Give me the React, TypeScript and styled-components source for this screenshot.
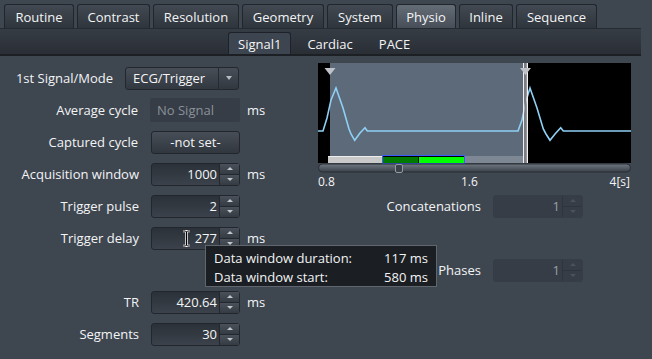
import React from 'react';
import styled, { createGlobalStyle } from 'styled-components';

const GlobalStyle = createGlobalStyle`
  html, body {
    margin: 0;
    padding: 0;
    background: #3e4650;
  }
`;

const Root = styled.div`
  position: relative;
  width: 652px;
  height: 359px;
  overflow: hidden;
  background: #3e4650;
  font-family: 'Open Sans', 'Noto Sans', sans-serif;
  font-size: 12px;
  color: #f3f4f5;
`;

const TabBar = styled.div`
  display: flex;
  gap: 3px;
  height: 28px;
  padding: 4px 0 0 4px;
  box-sizing: border-box;
`;

const Tab = styled.div<{ $width: number; $active?: boolean }>`
  width: ${(p) => p.$width}px;
  height: 24px;
  box-sizing: border-box;
  display: flex;
  align-items: center;
  justify-content: center;
  font-size: 13px;
  border: 1px solid #21262c;
  border-bottom: none;
  border-radius: 3px 3px 0 0;
  background: ${(p) =>
    p.$active
      ? 'linear-gradient(#646c76, #474e58)'
      : 'linear-gradient(#424952, #2f353c)'};
`;

const SubBar = styled.div`
  width: 641px;
  height: 28px;
  box-sizing: border-box;
  display: flex;
  align-items: flex-end;
  gap: 6px;
  padding-left: 228px;
  background: linear-gradient(#363c44, #2a2f36);
  border-top: 1px solid #262b31;
  border-bottom: 2px solid #1c2025;
`;

const SubTab = styled.div<{ $active?: boolean }>`
  height: 22px;
  box-sizing: border-box;
  display: flex;
  align-items: center;
  padding: 0 9px;
  font-size: 13px;
  border-radius: 3px 3px 0 0;
  border: 1px solid ${(p) => (p.$active ? '#1e2228' : 'transparent')};
  border-bottom: none;
  background: ${(p) => (p.$active ? '#3d4550' : 'transparent')};
`;

const Content = styled.div`
  display: flex;
  padding-top: 6px;
`;

const LeftColumn = styled.div`
  width: 318px;
  display: flex;
  flex-direction: column;
`;

const RightColumn = styled.div`
  width: 313px;
  display: flex;
  flex-direction: column;
`;

const FormRow = styled.div`
  display: flex;
  align-items: center;
  height: 32px;
`;

const Label = styled.div<{ $width?: number }>`
  width: ${(p) => p.$width ?? 151}px;
  box-sizing: border-box;
  padding-right: 12px;
  text-align: right;
  font-size: 13px;
  white-space: nowrap;
`;

const Unit = styled.span`
  margin-left: 7px;
  font-size: 13px;
`;

const Dropdown = styled.div`
  width: 114px;
  height: 23px;
  box-sizing: border-box;
  display: flex;
  border: 1px solid #23282e;
  border-radius: 3px;
  background: linear-gradient(#474e57, #323840);
  font-size: 13px;
`;

const DropdownText = styled.div`
  flex: 1;
  display: flex;
  align-items: center;
  padding-left: 7px;
`;

const DropdownArrow = styled.div`
  width: 19px;
  border-left: 1px solid #262b31;
  display: flex;
  align-items: center;
  justify-content: center;
  &::after {
    content: '';
    border-left: 3px solid transparent;
    border-right: 3px solid transparent;
    border-top: 4px solid #b8bcc1;
  }
`;

const ReadOnlyField = styled.div`
  width: 90px;
  height: 24px;
  box-sizing: border-box;
  display: flex;
  align-items: center;
  padding-left: 7px;
  border-radius: 2px;
  background: #363d46;
  color: #8b9199;
  font-size: 13px;
`;

const PushButton = styled.div`
  width: 89px;
  height: 23px;
  margin-left: 1px;
  box-sizing: border-box;
  display: flex;
  align-items: center;
  justify-content: center;
  border: 1px solid #22272d;
  border-radius: 3px;
  background: linear-gradient(#474e57, #31373e);
  font-size: 13px;
`;

const Spin = styled.div<{ $disabled?: boolean }>`
  position: relative;
  width: ${(p) => (p.$disabled ? 90 : 89)}px;
  height: 23px;
  box-sizing: border-box;
  display: flex;
  border: 1px solid ${(p) => (p.$disabled ? '#363d46' : '#22272d')};
  border-radius: 3px;
  background: ${(p) =>
    p.$disabled ? '#363d46' : 'linear-gradient(#2b3138, #3b424b)'};
  color: ${(p) => (p.$disabled ? '#9aa0a7' : '#f3f4f5')};
  font-size: 13px;
`;

const SpinValue = styled.div`
  flex: 1;
  display: flex;
  align-items: center;
  justify-content: flex-end;
  padding-right: 2px;
`;

const SpinButtons = styled.div<{ $disabled?: boolean }>`
  width: 19px;
  display: flex;
  flex-direction: column;
  border-left: 1px solid ${(p) => (p.$disabled ? '#2f353d' : '#23282e')};
`;

const SpinArrow = styled.div<{ $down?: boolean; $disabled?: boolean }>`
  flex: 1;
  display: flex;
  align-items: center;
  justify-content: center;
  background: ${(p) =>
    p.$disabled ? '#363d46' : 'linear-gradient(#4a515a, #353b42)'};
  border-top: ${(p) => (p.$down ? `1px solid ${p.$disabled ? '#2f353d' : '#23282e'}` : 'none')};
  &::after {
    content: '';
    border-left: 3px solid transparent;
    border-right: 3px solid transparent;
    ${(p) =>
      p.$down
        ? `border-top: 3px solid ${p.$disabled ? '#4a525c' : '#c4c8cc'};`
        : `border-bottom: 3px solid ${p.$disabled ? '#4a525c' : '#c4c8cc'};`}
  }
`;

const ChartBlock = styled.div`
  height: 128px;
  padding-top: 1px;
  box-sizing: border-box;
  display: flex;
  flex-direction: column;
`;

const AxisLabels = styled.div`
  display: grid;
  grid-template-columns: 143px 1fr auto;
  height: 17px;
  align-items: center;
  font-size: 12px;
  padding-right: 1px;
`;

const Tooltip = styled.div`
  position: absolute;
  left: 205px;
  top: 245px;
  width: 232px;
  height: 42px;
  box-sizing: border-box;
  padding: 2px 8px 0 8px;
  background: #1b1f23;
  border: 1px solid #60666e;
  font-size: 13px;
`;

const TipRow = styled.div`
  display: flex;
  justify-content: space-between;
  height: 19px;
  align-items: center;
`;

const Cursor = styled.svg`
  position: absolute;
  left: 182px;
  top: 230px;
`;

const tabs = [
  { name: 'Routine', width: 70 },
  { name: 'Contrast', width: 73 },
  { name: 'Resolution', width: 86 },
  { name: 'Geometry', width: 82 },
  { name: 'System', width: 66 },
  { name: 'Physio', width: 60, active: true },
  { name: 'Inline', width: 54 },
  { name: 'Sequence', width: 81 },
];

const SpinBox = ({ value, disabled }: { value: string; disabled?: boolean }) => (
  <Spin $disabled={disabled}>
    <SpinValue>{value}</SpinValue>
    <SpinButtons $disabled={disabled}>
      <SpinArrow $disabled={disabled} />
      <SpinArrow $down $disabled={disabled} />
    </SpinButtons>
  </Spin>
);

const wave =
  '0,68 5,68 9,55 13,37 18,25 25,45 31,66 33,71 36.7,77.3 42,70 47,64.7 49.3,68 ' +
  '200,68 204,57 208,38 212,25 219,45 225.3,66 228,71 232,77.3 237,71 242.7,64.7 245.3,68 313,68';

const Chart = () => (
  <svg width={313} height={110} viewBox="0 0 313 110">
    <defs>
      <linearGradient id="track" x1="0" y1="0" x2="0" y2="1">
        <stop offset="0" stopColor="#707882" />
        <stop offset="1" stopColor="#3a4048" />
      </linearGradient>
    </defs>
    <rect width={313} height={100} fill="#000" />
    <rect x={12} y={0} width={194} height={93} fill="#5d6a79" />
    <polyline points={wave} fill="none" stroke="#8fd0f5" strokeWidth={1.6} />
    <rect x={10} y={93} width={55} height={7} fill="#c9c9c9" />
    <rect x={10} y={93} width={55} height={1} fill="#eeeeee" />
    <rect x={65} y={94} width={35} height={6} fill="#007a00" />
    <rect x={101} y={94} width={45} height={6} fill="#00ff00" />
    <rect x={64.5} y={92.5} width={82} height={8} fill="none" stroke="#3a5cff" />
    <rect x={147} y={93} width={59} height={7} fill="#7e8894" />
    <rect x={205} y={0} width={1.5} height={100} fill="#f0f0f0" />
    <rect x={206.5} y={0} width={2} height={100} fill="#7a7f86" />
    <rect x={208.5} y={0} width={1.5} height={100} fill="#f0f0f0" />
    <polygon points="6.5,5 17.5,5 12,12" fill="#bfc3c8" />
    <polygon points="202,5 213,5 207.5,12" fill="#bfc3c8" />
    <rect x={0.5} y={101} width={312} height={8} rx={4} fill="url(#track)" stroke="#2a2f35" />
    <rect x={77.5} y={101.5} width={7} height={8} rx={1.5} fill="#3a4149" stroke="#959ba2" />
  </svg>
);

const App = () => (
  <Root>
    <GlobalStyle />
    <TabBar>
      {tabs.map((t) => (
        <Tab key={t.name} $width={t.width} $active={t.active}>
          {t.name}
        </Tab>
      ))}
    </TabBar>
    <SubBar>
      <SubTab $active>Signal1</SubTab>
      <SubTab>Cardiac</SubTab>
      <SubTab>PACE</SubTab>
    </SubBar>
    <Content>
      <LeftColumn>
        <FormRow>
          <Label $width={125}>1st Signal/Mode</Label>
          <Dropdown>
            <DropdownText>ECG/Trigger</DropdownText>
            <DropdownArrow />
          </Dropdown>
        </FormRow>
        <FormRow>
          <Label $width={150}>Average cycle</Label>
          <ReadOnlyField>No Signal</ReadOnlyField>
          <Unit>ms</Unit>
        </FormRow>
        <FormRow>
          <Label $width={150}>Captured cycle</Label>
          <PushButton>-not set-</PushButton>
        </FormRow>
        <FormRow>
          <Label>Acquisition window</Label>
          <SpinBox value="1000" />
          <Unit>ms</Unit>
        </FormRow>
        <FormRow>
          <Label>Trigger pulse</Label>
          <SpinBox value="2" />
        </FormRow>
        <FormRow>
          <Label>Trigger delay</Label>
          <SpinBox value="277" />
          <Unit>ms</Unit>
        </FormRow>
        <FormRow />
        <FormRow>
          <Label>TR</Label>
          <SpinBox value="420.64" />
          <Unit>ms</Unit>
        </FormRow>
        <FormRow>
          <Label>Segments</Label>
          <SpinBox value="30" />
        </FormRow>
      </LeftColumn>
      <RightColumn>
        <ChartBlock>
          <Chart />
          <AxisLabels>
            <span>0.8</span>
            <span>1.6</span>
            <span>4[s]</span>
          </AxisLabels>
        </ChartBlock>
        <FormRow>
          <Label $width={175}>Concatenations</Label>
          <SpinBox value="1" disabled />
        </FormRow>
        <FormRow />
        <FormRow>
          <Label $width={175}>Phases</Label>
          <SpinBox value="1" disabled />
        </FormRow>
      </RightColumn>
    </Content>
    <Tooltip>
      <TipRow>
        <span>Data window duration:</span>
        <span>117 ms</span>
      </TipRow>
      <TipRow>
        <span>Data window start:</span>
        <span>580 ms</span>
      </TipRow>
    </Tooltip>
    <Cursor width={9} height={17} viewBox="0 0 9 17">
      <path d="M1 1h2.5l1 1 1-1H8M4.5 2v13M1 16h2.5l1-1 1 1H8" fill="none" stroke="#fff" strokeWidth={2.4} />
      <path d="M1 1h2.5l1 1 1-1H8M4.5 2v13M1 16h2.5l1-1 1 1H8" fill="none" stroke="#000" strokeWidth={1} />
    </Cursor>
  </Root>
);

export default App;
